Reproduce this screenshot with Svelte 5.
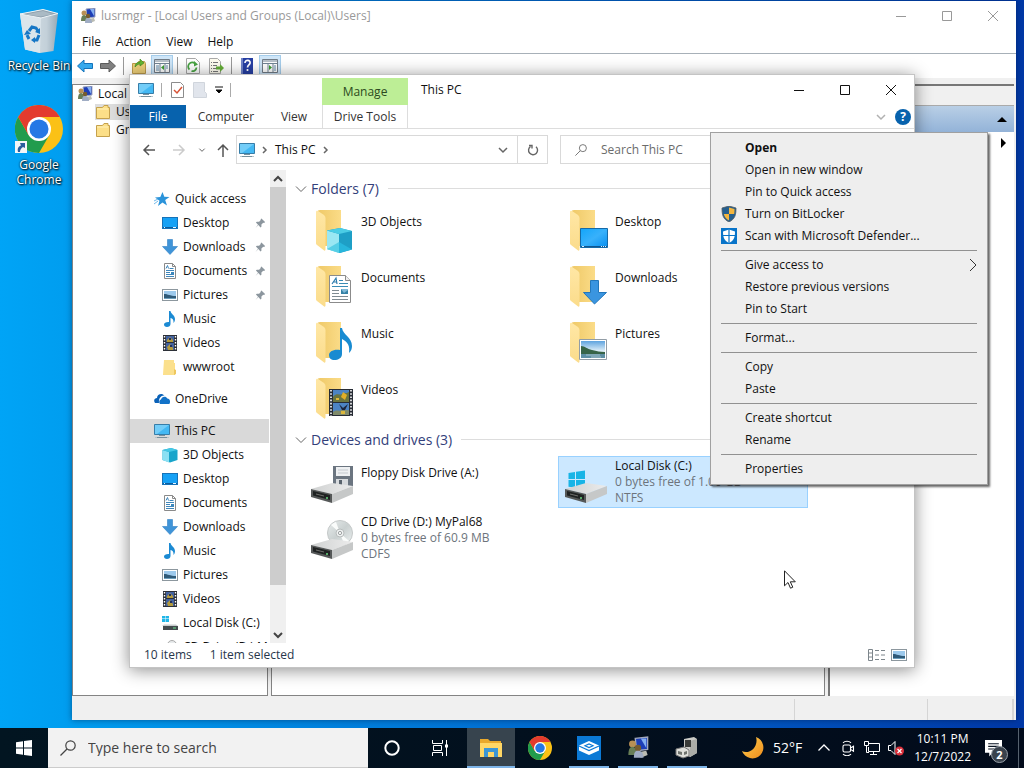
<script>
  let taskSearch = $state('');
  let pcSearch = $state('');
  let selectedDrive = $state('Local Disk (C:)');

  const quickAccess = [
    { name: 'Desktop', icon: 'desktop', pinned: true },
    { name: 'Downloads', icon: 'downloads', pinned: true },
    { name: 'Documents', icon: 'documents', pinned: true },
    { name: 'Pictures', icon: 'pictures', pinned: true },
    { name: 'Music', icon: 'music' },
    { name: 'Videos', icon: 'videos' },
    { name: 'wwwroot', icon: 'folder' }
  ];

  const thisPc = [
    { name: '3D Objects', icon: 'cube' },
    { name: 'Desktop', icon: 'desktop' },
    { name: 'Documents', icon: 'documents' },
    { name: 'Downloads', icon: 'downloads' },
    { name: 'Music', icon: 'music' },
    { name: 'Pictures', icon: 'pictures' },
    { name: 'Videos', icon: 'videos' },
    { name: 'Local Disk (C:)', icon: 'drive' },
    { name: 'CD Drive (D:) M', icon: 'cd' }
  ];

  const folders = [
    { name: '3D Objects', icon: 'cube' },
    { name: 'Desktop', icon: 'desktop' },
    { name: 'Documents', icon: 'documents' },
    { name: 'Downloads', icon: 'downloads' },
    { name: 'Music', icon: 'music' },
    { name: 'Pictures', icon: 'pictures' },
    { name: 'Videos', icon: 'videos' }
  ];

  const drives = [
    { name: 'Floppy Disk Drive (A:)', icon: 'floppy' },
    { name: 'Local Disk (C:)', icon: 'windows', free: '0 bytes free of 1.00 GB', fs: 'NTFS' },
    { name: 'CD Drive (D:) MyPal68', icon: 'cd', free: '0 bytes free of 60.9 MB', fs: 'CDFS' }
  ];

  // one inner array per separated group
  const menuGroups = [
    [
      { label: 'Open', bold: true },
      { label: 'Open in new window' },
      { label: 'Pin to Quick access' },
      { label: 'Turn on BitLocker', icon: 'uac' },
      { label: 'Scan with Microsoft Defender...', icon: 'defender' }
    ],
    [{ label: 'Give access to', sub: true }, { label: 'Restore previous versions' }, { label: 'Pin to Start' }],
    [{ label: 'Format...' }],
    [{ label: 'Copy' }, { label: 'Paste' }],
    [{ label: 'Create shortcut' }, { label: 'Rename' }],
    [{ label: 'Properties' }]
  ];
</script>

{#snippet small(name)}
  <svg class="i16" viewBox="0 0 16 16" aria-hidden="true">
    {#if name === 'desktop'}
      <rect x="0.5" y="2.5" width="15" height="11" fill="#16a1f5" stroke="#1672b8" />
      <path d="M1 12.5h14" stroke="#0b5c9c" /><path d="M2 12.5h1M11 12.5h3" stroke="#e8f6ff" />
    {:else if name === 'downloads'}
      <path d="M5.500 0.500h5v7h5L8 15.500 0.500 7.500h5z" fill="#3f94d8" stroke="#2f7fc4" stroke-width=".6" />
    {:else if name === 'documents'}
      <path d="M2.500 0.500h8l3 3v12h-11z" fill="#fff" stroke="#8a8a8a" />
      <path d="M10.500 0.500v3h3" fill="none" stroke="#8a8a8a" />
      <path d="M4 5.500 5.500 2.500l1 3M4 7.500h8M4 9.500h4M4 11.500h8M4 13.500h8M7.500 5.500h4" fill="none" stroke="#3f86ba" />
      <path d="M9 9h3v2H9z" fill="#3b87bd" />
    {:else if name === 'pictures'}
      <rect x="0.500" y="2.500" width="15" height="11" fill="#fff" stroke="#8c979e" />
      <path d="M2 4h12v8H2z" fill="#9cc9ec" /><path d="M2 7c4 0 6 2 12 2v3H2z" fill="#2f5a78" /><path d="M2 11h12v1H2z" fill="#6b9dbb" />
    {:else if name === 'music'}
      <path d="M7 0h1.500c.3 3 4.500 4 4.500 8 0 2-.7 3-1.500 4 .3-3-.7-4.500-3-5v6c0 2-1.600 3-3.500 3S2 15 2 13.500 4 10.800 7 11z" fill="#1b8ad3" />
    {:else if name === 'videos'}
      <path d="M1 0h14v16H1z" fill="#2c3038" /><path d="M4 1h8v6H4zM4 8h8v7H4z" fill="#4262a0" />
      <path d="M5 5l3-3 3 3v2H5zM5 12l3-3 3 4v2H6z" fill="#b49b3c" /><path d="M7 3h2v2H7zM8 10h2v2H8z" fill="#22305c" />
      <path d="M2.500 1v15M13.500 1v15" stroke="#fff" stroke-width="1.400" stroke-dasharray="1.500 1.500" />
    {:else if name === 'folder'}
      <path d="M2 1h10v3h1v12H1z" fill="#ffdf84" /><path d="M2 1h10v8c0 3 2 4 1 6l-2 1H2z" fill="#fbe08d" /><path d="M12 10l2 1v4l-2 1z" fill="#eec75e" />
    {:else if name === 'cube'}
      <path d="M0.500 3 9 1l6.500 2v10L8 15.500 0.500 13z" fill="#19a5cb" /><path d="M0.500 3 7 5v10.500L0.500 13z" fill="#8be0f3" /><path d="M0.500 3 9 1l6.500 2L7 5z" fill="#45c8e5" />
    {:else if name === 'drive'}
      <path d="M0 1h3v2.500H0zM3.500 1H7v2.500H3.500zM0 4h3v3H0zM3.500 4H7v3H3.500z" fill="#20b6e8" />
      <path d="M2 9.500h12l2 1.500H0z" fill="#c8cccd" /><path d="M1 11h15v4H1z" fill="#444b4e" /><path d="M11 12.500h3v1h-3z" fill="#68e28a" />
    {:else if name === 'cd'}
      <circle cx="10" cy="6" r="4.500" fill="#e8ebec" stroke="#aaa" /><circle cx="10" cy="6" r="1" fill="#fff" stroke="#999" />
      <path d="M0 11h16v4H0z" fill="#555" />
    {:else if name === 'pc'}
      <path d="M0.500 1.500h15v10h-15z" fill="#43b8f3" stroke="#377da8" /><path d="M1 2h14L3 11H1z" fill="#73cdf8" />
      <path d="M5 12.500h6M3 14.500h10" stroke="#77909d" /><path d="M1 14.500h2M13 14.500h2" stroke="#b7c3c9" />
    {:else if name === 'star'}
      <path d="M8.500 1l1.800 4.700 5.200.2-4.300 3.200 1.800 5.400L8.500 11.600 4 15l1.500-5.300L1 6.500l5.300-.6z" fill="#2a93da" /><path d="M0 10l4-2M0 13l4-3" stroke="#70b9ea" />
    {:else if name === 'onedrive'}
      <path d="M1 12C-1 9 1 7 3 7c0-4 5-5.500 7.500-2.500C6.500 4 4.500 8 5 12z" fill="#0b62b8" /><path d="M6 13c-1.600-2-.4-4 1-4.400.5-3 5-4 6.300-1 2.700 0 3.500 3 2 5.400z" fill="#1272c8" />
    {:else if name === 'users'}
      <path d="M6 1l9-1v9l-8 1z" fill="#1d3eb7" stroke="#a2a9bf" /><path d="M10 1l4 7V1z" fill="#84aff1" /><path d="M8 11l6-1 1 3-5 2z" fill="#bbbdb4" />
      <circle cx="4" cy="5" r="2.500" fill="#b99055" /><path d="M1 13c0-4 1-6 3-6s3 2 3 6z" fill="#687e56" />
      <circle cx="8" cy="8" r="2.300" fill="#765c2f" /><path d="M5 15c0-4 1-5 3-5s4 1 4 5z" fill="#a0adc4" />
    {:else if name === 'yellow'}
      <path d="M1.500 3.500h6l1.500-2h4v2h1.500v11h-13z" fill="#fcdf88" stroke="#c5a14c" /><path d="M2 5h11" stroke="#fff2ba" />
    {:else if name === 'uac'}
      <path d="M8 0l7 2c0 7-1 11-7 14C2 13 1 9 1 2z" fill="#26608f" /><path d="M8 1.500l5.500 1.500c0 2 0 3-.3 5H8zM2.800 8H8v6.500C5 13 3.500 11 2.800 8z" fill="#f5b63d" /><path d="M8 0l7 2c0 7-1 11-7 14C2 13 1 9 1 2z" fill="none" stroke="#505a61" stroke-width=".8" />
    {:else if name === 'defender'}
      <path d="M0 0h16v16H0z" fill="#0874c9" /><path d="M8 1.500l6 2c0 6-1 9-6 11.500C3 12.500 2 9.500 2 3.500z" fill="#fff" /><path d="M8 1v14M2 7.500h12" stroke="#0874c9" stroke-width="1.200" />
    {:else if name === 'back'}
      <path d="M0.500 8 7 2v3.500h8.500v5H7V14z" fill="#35a9ed" stroke="#1473ba" />
    {:else if name === 'forward'}
      <path d="M15.500 8 9 2v3.500H0.500v5H9V14z" fill="#808080" stroke="#5c5c5c" />
    {:else if name === 'upfolder'}
      <path d="M1.500 5.500h5l1-2h6l1 2v10h-13z" fill="#edcf79" stroke="#bd9b4c" /><path d="M4 9c0-3 2-5 5-5V1l4 4-4 3V6C7 6 6 7 4 9z" fill="#64b631" stroke="#398320" stroke-width=".6" />
    {:else if name === 'panel-left' || name === 'panel-right'}
      <path d="M0.500 1.500h15v13H0.500z" fill="#fff" stroke="#727c87" /><path d="M1 3h14M1 5.500h14" stroke="#718496" /><path d="M6 6v8M11 6v8" stroke="#718496" />
      {#if name === 'panel-left'}<path d="M10 7v5L7 9.500z" fill="#3c9e32" /><path d="M2 8h3M2 10h3M2 12h3M12 8h2M12 10h2" stroke="#5d89aa" />
      {:else}<path d="M7 7v5l3-2.500z" fill="#3c9e32" /><path d="M12 8h2M12 10h2M12 12h2" stroke="#5d89aa" />{/if}
    {:else if name === 'refresh'}
      <path d="M1.500 0.500h9l4 4v11h-13z" fill="#fff" stroke="#a8a8a8" />
      <path d="M4.500 11.500A4 4 0 0 1 10 5.500" fill="none" stroke="#49a343" stroke-width="1.800" /><path d="M9 3l4 3.500-4 2z" fill="#49a343" />
      <path d="M11.500 9.500a4 4 0 0 1-5 3.500" fill="none" stroke="#49a343" stroke-width="1.800" />
    {:else if name === 'export'}
      <path d="M1.500 0.500h8l3 3v12h-11z" fill="#fffdf0" stroke="#aaa" /><path d="M3 4.500h1M3 7.500h1M3 10.500h1M3 13.500h1M5 4.500h5M5 7.500h4M5 10.500h3M5 13.500h5" stroke="#777" /><path d="M8 8.500h4V6l4 4-4 4v-2.500H8z" fill="#65ae38" />
    {:else if name === 'help'}
      <path d="M2 0h12v16H2z" fill="#2740a4" /><path d="M2 0h2v16H2z" fill="#7084c8" /><path d="M6 5c0-4 6-3 5 .2C10.600 7 8.600 7 8.500 9.500M8.500 11v2" fill="none" stroke="#fff" stroke-width="1.700" />
    {:else if name === 'check'}
      <path d="M2.500 0.500h9l3 3v12h-12z" fill="#fff" stroke="#8c8c8c" /><path d="M5 8l3 3 5-6" fill="none" stroke="#d75235" stroke-width="1.500" />
    {:else if name === 'blank'}
      <path d="M1.500 0.500h11v9l2 2v4h-13z" fill="#e1e5ec" stroke="#d0d5dc" />
    {/if}
  </svg>
{/snippet}

{#snippet chevron(dir)}
  <svg class="chev" viewBox="0 0 12 12" aria-hidden="true">
    {#if dir === 'down'}<path d="M2 4l4 4 4-4" />
    {:else if dir === 'wide'}<path d="M1 3.500l5 5 5-5" />
    {:else if dir === 'up'}<path d="M2 8l4-4 4 4" />
    {:else}<path d="M4 3l3 3-3 3" />{/if}
  </svg>
{/snippet}

{#snippet magnifier()}
  <svg class="i16" viewBox="0 0 16 16" fill="none" stroke="currentColor" stroke-width="1.200" aria-hidden="true">
    <circle cx="10.500" cy="5.500" r="4.700" /><path d="M7 9 0.500 15.500" />
  </svg>
{/snippet}

{#snippet bigFolder(name)}
  <svg class="i48" viewBox="0 0 48 48" aria-hidden="true">
    <path d="M10 3.500 12 3h21v36H13z" fill="url(#folderBack)" />
    <path d="M8 5c0-1 1-1.500 2-1l6 4c1 1 1.500 2 1.500 3v31c0 2-1 2-2 1L9 38c-.7-.5-1-1-1-2z" fill="url(#folderFront)" />
    {#if name === 'cube'}
      <path d="M19 23.500 32 21l12 3v18.500L32 46l-13-4z" fill="#1e9fc6" />
      <path d="M19 23.500 31 27v19l-12-4z" fill="#9ae7f3" /><path d="M19 23.500 32 21l12 3-13 3z" fill="#4bcde5" />
      <path d="M31 46l13-3.500L31 35z" fill="#27b6dc" /><path d="M19 42l12-7v11z" fill="#57cfe6" />
    {:else if name === 'desktop'}
      <path d="M18.500 21.500h27v19h-27z" fill="url(#screen)" stroke="#156aa8" /><path d="M19 39.500h26" stroke="#0f5690" /><path d="M39 39.500h6" stroke="#d5efff" stroke-dasharray="1 1" /><path d="M20 39.500h2" stroke="#d5efff" />
    {:else if name === 'documents'}
      <path d="M21.500 12.500h16l5 5v22h-21z" fill="#fff" stroke="#8b8b8b" /><path d="M37.500 12.500v5h5" fill="#eee" stroke="#8b8b8b" />
      <path d="M24 21l4-6 1 6M25 19h4" fill="none" stroke="#2c7cae" stroke-width="1.200" /><path d="M31 17.500h4M31 20.500h9M24 23.500h16" stroke="#3a8cb5" />
      <path d="M24 27.500h7M24 30.500h7M24 33.500h16M24 36.500h16" stroke="#7f8b92" /><path d="M33 26h7v5h-7z" fill="#3482a6" /><path d="M33 26h7v1l-4 3z" fill="#81bad8" />
    {:else if name === 'downloads'}
      <path d="M28.500 17.500h8v12h8L32.500 41 21.500 29.500h7z" fill="#3a95e0" stroke="#2377bb" />
    {:else if name === 'music'}
      <path d="M32 9h2c1 7 10 9 10 18 0 3-1 5-3 7 1-7-1-11-7-14v15c0 4-4 6-7.500 6S21 39 21 36s4-6 11-5z" fill="#198bd1" />
    {:else if name === 'pictures'}
      <path d="M17.500 20.500h27v20h-27z" fill="#fff" stroke="#929da6" /><path d="M19 22h24v17H19z" fill="url(#sky)" />
      <path d="M19 27c4 0 6 3 11 4s8 2 13 2v2H19z" fill="#376448" /><path d="M19 35h24v4H19z" fill="#5d8fa4" /><path d="M24 36h14M29 38h10" stroke="#a4c1ca" />
    {:else if name === 'videos'}
      <path d="M21 14h24v27H21z" fill="#272c35" /><path d="M25 15h16v12H25zM25 28h16v12H25z" fill="#4c83c4" />
      <path d="M25 22c4-5 7-1 9-3s4 0 7-2v10H25z" fill="#6a743f" /><path d="M25 37c4-3 6 0 8-2s5 1 8 0v5H25z" fill="#7f8a6a" />
      <path d="M35 17l4 3-2 5-4-3z" fill="#e1ae28" /><path d="M31 29l4 4 5-4-3 6h-3z" fill="#1b243d" /><path d="M33 36h4v3h-4zM28 23h3v2h-3z" fill="#dcb73b" />
      <path d="M23 15v26M43 15v26" stroke="#fff" stroke-width="1.600" stroke-dasharray="1.600 1.600" />
    {/if}
  </svg>
{/snippet}

{#snippet bigDrive(name)}
  <svg class="i48" viewBox="0 0 48 48" aria-hidden="true">
    {#if name === 'floppy'}
      <path d="M25 8h20v20H27l-2-2z" fill="#6b7580" /><path d="M28 9h14v9H28z" fill="#eef0f2" /><path d="M28 21h12v7H28z" fill="#d7dadd" /><path d="M31 22h3v5h-3z" fill="#59636d" /><path d="M30 12h10M30 15h10" stroke="#c5cacf" />
    {:else if name === 'cd'}
      <circle cx="32" cy="19" r="12.500" fill="url(#disc)" stroke="#c5c9c9" /><path d="M32 19l-9-8a12 12 0 0 1 5-3zM32 19l9 8a12 12 0 0 1-5 3z" fill="#fafcfb" />
      <circle cx="32" cy="19" r="4" fill="#eef1f1" stroke="#b8bdbd" /><circle cx="32" cy="19" r="1.600" fill="#fff" stroke="#9ca1a1" />
    {:else}
      <path d="M6.500 15 13 14v7H6.500zM14 13.800 23 12.500V21h-9zM6.500 22H13v7.500l-6.500-.8zM14 22h9v8l-9-1z" fill="#18b4e6" />
    {/if}
    <path d="M3 31 24 25l21 3-21 8z" fill="url(#lid)" /><path d="M3 31l21 5v9L3 39z" fill="#555858" /><path d="M24 36 45 28v8L24 45z" fill="#c6c8c8" />
    <path d="M5 33l17 4v5L5 37.500z" fill="#1f2222" /><path d="M8 36l8 2" stroke="#70706d" /><circle cx="19" cy="40" r="1" fill="#6bd980" />
  </svg>
{/snippet}

{#snippet chrome()}
  <svg class="chrome" viewBox="0 0 48 48" aria-hidden="true">
    <circle cx="24" cy="24" r="24" fill="#fbc116" />
    <path d="M24 24 13.600 30 3.200 12A24 24 0 0 0 24 48l10.400-18z" fill="#219c4d" />
    <path d="M24 12h20.800A24 24 0 0 0 3.200 12l10.400 18z" fill="#e33b2e" />
    <circle cx="24" cy="24" r="12" fill="#fff" /><circle cx="24" cy="24" r="9.500" fill="#2678e5" />
  </svg>
{/snippet}

{#snippet windowButtons()}
  <div class="win-buttons">
    <button aria-label="Minimize"><svg viewBox="0 0 10 10"><path d="M0 5.500h10" /></svg></button>
    <button aria-label="Maximize"><svg viewBox="0 0 10 10"><path d="M0.500 0.500h9v9h-9z" /></svg></button>
    <button aria-label="Close"><svg viewBox="0 0 10 10"><path d="M0 0l10 10M10 0 0 10" /></svg></button>
  </div>
{/snippet}

{#snippet navRow(item)}
  <li>
    <a class="nav-row child" href="#{item.name}">
      {@render small(item.icon)}
      <span>{item.name}</span>
      {#if item.pinned}
        <svg class="pin" viewBox="0 0 12 12" aria-hidden="true"><path d="M7 1l4 4-1 1-1-.3-2 2V10L6 11 3.700 8.300 0.500 11.500l2.800-3.700L1 5.500l1-1h2.500l2-2L6 2z" /></svg>
      {/if}
    </a>
  </li>
{/snippet}

<svg class="defs" aria-hidden="true">
  <defs>
    <linearGradient id="folderBack"><stop offset="0" stop-color="#efc968" /><stop offset="1" stop-color="#fbdc88" /></linearGradient>
    <linearGradient id="folderFront" x2="0" y2="1"><stop offset="0" stop-color="#ffe7a5" /><stop offset="1" stop-color="#fbdc8b" /></linearGradient>
    <linearGradient id="screen" x2="1" y2="1"><stop offset="0" stop-color="#12a5fa" /><stop offset=".5" stop-color="#38b1fb" /><stop offset="1" stop-color="#078ff0" /></linearGradient>
    <linearGradient id="sky" x2="0" y2="1"><stop offset="0" stop-color="#5ea3df" /><stop offset=".6" stop-color="#e1f0f8" /></linearGradient>
    <linearGradient id="disc" x2="1" y2="1"><stop offset="0" stop-color="#e9eded" /><stop offset=".5" stop-color="#c9d0d0" /><stop offset="1" stop-color="#eef2f2" /></linearGradient>
    <linearGradient id="lid"><stop offset="0" stop-color="#cfd1d1" /><stop offset="1" stop-color="#ececec" /></linearGradient>
    <linearGradient id="bin"><stop offset="0" stop-color="#dce4e9" /><stop offset=".7" stop-color="#c3d0d9" /><stop offset="1" stop-color="#98a9b5" /></linearGradient>
    <linearGradient id="moon" x2="1" y2="1"><stop offset="0" stop-color="#ffcf50" /><stop offset="1" stop-color="#ef8d1c" /></linearGradient>
  </defs>
</svg>

<div class="screen">
  <main class="desktop">
    <div class="shortcuts">
      <a class="shortcut" href="#recycle">
        <svg class="shortcut-icon" viewBox="0 0 48 48" aria-hidden="true">
          <path d="M5 8 28 3.500 43 7.500 38.500 45 25 47 10 43.500z" fill="url(#bin)" />
          <path d="M5 8l21 4-1 35-15-3.500z" fill="#dbe5eb" /><path d="M5 8 28 3.500 43 7.500 26 12z" fill="#8ea0ad" stroke="#eef4f7" />
          <path d="M10 8.500 28 5l10 3-12 2.500z" fill="#aabac4" />
          <path d="M14 25l3-4 4 1 2 3M24 29l-2 5h-3M14 33l-2-4" fill="none" stroke="#1677c6" stroke-width="3" />
          <path d="M25 22v6l-5-2zM20 31v6l-4-3zM9 29l3-5 4 4z" fill="#1677c6" />
        </svg>
        <span>Recycle Bin</span>
      </a>
      <a class="shortcut" href="#chrome">
        <span class="shortcut-icon badged">
          {@render chrome()}
          <svg class="arrow" viewBox="0 0 12 12" aria-hidden="true"><path d="M0 0h12v12H0z" fill="#f4f6f8" /><path d="M3 11C2 7 4 5 6 4.500L5 2h5v5L8 6C6 7 5 9 5 11z" fill="#2a5f9e" /></svg>
        </span>
        <span>Google Chrome</span>
      </a>
    </div>

    <section class="mmc" aria-label="lusrmgr">
      <header class="mmc-title">
        {@render small('users')}
        <h2>lusrmgr - [Local Users and Groups (Local)\Users]</h2>
        {@render windowButtons()}
      </header>
      <nav class="mmc-menu">
        <button>File</button><button>Action</button><button>View</button><button>Help</button>
      </nav>
      <div class="mmc-tools">
        <button aria-label="Back">{@render small('back')}</button>
        <button aria-label="Forward">{@render small('forward')}</button>
        <i></i>
        <button aria-label="Up one level">{@render small('upfolder')}</button>
        <button class="on" aria-label="Console tree">{@render small('panel-left')}</button>
        <i></i>
        <button aria-label="Refresh">{@render small('refresh')}</button>
        <button aria-label="Export list">{@render small('export')}</button>
        <i></i>
        <button aria-label="Help">{@render small('help')}</button>
        <button class="on" aria-label="Action pane">{@render small('panel-right')}</button>
      </div>
      <div class="mmc-body">
        <ul class="tree">
          <li>{@render small('users')}<span>Local Users and Groups (Local)</span></li>
          <li class="leaf"><span class="pick">{@render small('yellow')}<span>Users</span></span></li>
          <li class="leaf">{@render small('yellow')}<span>Groups</span></li>
        </ul>
        <div class="list"></div>
        <aside class="actions">
          <div class="actions-head"></div>
          <button class="actions-users" aria-label="Collapse"><svg viewBox="0 0 10 5"><path d="M0 5 5 0l5 5z" /></svg></button>
          <button class="actions-more" aria-label="More actions"><svg viewBox="0 0 5 10"><path d="M0 0l5 5-5 5z" /></svg></button>
        </aside>
      </div>
      <footer class="mmc-status"><span></span><span></span><span></span><span></span></footer>
    </section>

    <section class="explorer" aria-label="This PC">
      <header class="ex-head">
        <div class="quick-tools">
          {@render small('pc')}<i></i>{@render small('check')}{@render small('blank')}
          <svg class="customize" viewBox="0 0 8 8" aria-hidden="true"><path d="M0 1h8" /><path d="M1 4h6L4 7z" /></svg><i></i>
        </div>
        <span class="context-tab">Manage</span>
        <h1>This PC</h1>
        {@render windowButtons()}
      </header>
      <nav class="ribbon">
        <button class="file">File</button>
        <button>Computer</button>
        <button class="view">View</button>
        <button class="tools">Drive Tools</button>
        <button class="expand" aria-label="Expand the ribbon">{@render chevron('down')}</button>
        <button class="help" aria-label="Help">?</button>
      </nav>
      <div class="address">
        <button class="nav-btn" aria-label="Back"><svg viewBox="0 0 14 14"><path d="M13 7H2M7 2 2 7l5 5" /></svg></button>
        <button class="nav-btn off" aria-label="Forward"><svg viewBox="0 0 14 14"><path d="M1 7h11M7 2l5 5-5 5" /></svg></button>
        <button class="recent" aria-label="Recent locations">{@render chevron('down')}</button>
        <button class="up" aria-label="Up"><svg viewBox="0 0 14 14"><path d="M7 14V2M2 7l5-5 5 5" /></svg></button>
        <div class="crumbs">
          {@render small('pc')}
          {@render chevron('right')}
          <a href="#pc">This PC</a>
          {@render chevron('right')}
          <button class="drop" aria-label="Previous locations">{@render chevron('down')}</button>
          <button class="reload" aria-label="Refresh"><svg viewBox="0 0 12 12"><path d="M3.500 2.500A4.500 4.500 0 1 0 9 2.800M2 1.500h3v3" /></svg></button>
        </div>
        <label class="ex-search">
          {@render magnifier()}
          <input type="text" placeholder="Search This PC" aria-label="Search This PC" bind:value={pcSearch} />
        </label>
      </div>
      <div class="ex-body">
        <nav class="side">
          <ul>
            <li><a class="nav-row" href="#quick">{@render small('star')}<span>Quick access</span></a></li>
            {#each quickAccess as item}{@render navRow(item)}{/each}
            <li class="space"><a class="nav-row" href="#onedrive">{@render small('onedrive')}<span>OneDrive</span></a></li>
            <li class="space"><a class="nav-row current" href="#pc">{@render small('pc')}<span>This PC</span></a></li>
            {#each thisPc as item}{@render navRow(item)}{/each}
          </ul>
        </nav>
        <div class="scrollbar">
          <button aria-label="Scroll up">{@render chevron('up')}</button>
          <div class="thumb"></div>
          <button aria-label="Scroll down">{@render chevron('down')}</button>
        </div>
        <div class="content">
          <h3>{@render chevron('wide')}<span>Folders (7)</span></h3>
          <div class="tiles">
            {#each folders as f}
              <button class="tile">{@render bigFolder(f.icon)}<span class="info">{f.name}</span></button>
            {/each}
          </div>
          <h3>{@render chevron('wide')}<span>Devices and drives (3)</span></h3>
          <div class="tiles">
            {#each drives as d}
              <button class="tile" class:selected={selectedDrive === d.name} onclick={() => (selectedDrive = d.name)}>
                {@render bigDrive(d.icon)}
                <span class="info" class:full={d.free}>
                  {d.name}
                  {#if d.free}<small>{d.free}</small><small>{d.fs}</small>{/if}
                </span>
              </button>
            {/each}
          </div>
        </div>
      </div>
      <footer class="ex-status">
        <span>10 items</span><span>1 item selected</span>
        <button class="details" aria-label="Details view"><svg class="view-list" viewBox="0 0 18 14" fill="none" stroke="#7c858b"><path d="M0.500 1.500h4v11h-4zM0.500 5h4M0.500 9h4" /><path d="M7 2.500h4M13 2.500h4M7 7h4M13 7h4M7 11.500h4M13 11.500h4" /></svg></button>
        <button aria-label="Large icons view">{@render small('pictures')}</button>
      </footer>
    </section>

    <div class="menu" role="menu">
      {#each menuGroups as group}
        <div class="menu-group">
          {#each group as entry}
            <button role="menuitem" class:bold={entry.bold}>
              <span class="slot">{#if entry.icon}{@render small(entry.icon)}{/if}</span>
              <span>{entry.label}</span>
              {#if entry.sub}<svg class="sub" viewBox="0 0 8 14" aria-hidden="true"><path d="M1 1l6 6-6 6" /></svg>{/if}
            </button>
          {/each}
        </div>
      {/each}
    </div>

    <svg class="pointer" viewBox="0 0 12 19" aria-hidden="true"><path d="M0.500 0.800v15l3.500-3.300 2.500 5.700 2.300-1-2.500-5.400h5z" fill="#fff" stroke="#222" /></svg>
  </main>

  <footer class="taskbar">
    <button class="start" aria-label="Start"><svg class="i16" viewBox="0 0 16 16"><path d="M0 2.300 7 1.300v6.300H0zM8 1.100 16 0v7.600H8zM0 8.500h7v6.300l-7-1zM8 8.500h8V16l-8-1.100z" fill="#fff" /></svg></button>
    <label class="task-search">
      {@render magnifier()}
      <input type="text" placeholder="Type here to search" aria-label="Type here to search" bind:value={taskSearch} />
    </label>
    <button class="tb" aria-label="Cortana"><svg class="i16" viewBox="0 0 16 16"><circle cx="8" cy="8" r="6.700" fill="none" stroke="#fff" stroke-width="2" /></svg></button>
    <button class="tb" aria-label="Task view"><svg class="i16" viewBox="0 0 16 16" fill="none" stroke="#fff"><path d="M0.500 0v3.500h10V0M0.500 16v-3.500h10V16M1.500 5.500h8v5h-8zM14.500 0v16" /><path d="M13 4.500h3v3h-3z" fill="#fff" stroke="none" /></svg></button>
    <div class="apps">
      <button class="tb active" aria-label="File Explorer"><svg class="i24" viewBox="0 0 24 24"><path d="M1 3h8l2 2h11v15H1z" fill="#e9a92c" /><path d="M1 7h22v14H1z" fill="#ffd766" /><path d="M5 12h14v9h-4v-5H9v5H5z" fill="#3c96d5" /></svg></button>
      <button class="tb" aria-label="Google Chrome">{@render chrome()}</button>
      <button class="tb open" aria-label="Sandbox"><svg class="i24" viewBox="0 0 24 24"><path d="M0 0h24v24H0z" fill="#0b79d5" /><path d="M2 9.500 12 5l10 4.500v5L12 19 2 14.500z" fill="#fff" /><path d="M2 10l10 4.500L22 10M8 9.700l4-1.800 4 1.800-4 1.800z" fill="none" stroke="#0b79d5" stroke-width="1.200" /></svg></button>
      <button class="tb open large" aria-label="lusrmgr">{@render small('users')}</button>
      <button class="tb open" aria-label="Computer Management"><svg class="i24" viewBox="0 0 24 24"><path d="M9 3l10-2 3 2v14l-7 4-6-4z" fill="#cacbc7" /><path d="M15 5l7-2v14l-7 4z" fill="#aaaca7" /><path d="M10 4h6v7h-6z" fill="#393b38" /><path d="M1 13l8-2 5 3v6l-6 2-7-3z" fill="#dedfda" stroke="#777" /><path d="M3 15l4 1v3l-4-1zM9 16l3-1v3l-3 1z" fill="#6e726d" /></svg></button>
    </div>
    <div class="tray">
      <button class="weather">
        <svg class="i24" viewBox="0 0 24 24" aria-hidden="true"><path d="M15 1a11 11 0 1 1-14 14c7 4 17-4 14-14z" fill="url(#moon)" /></svg>
        52°F
      </button>
      <button aria-label="Show hidden icons"><svg class="i16" viewBox="0 0 16 16" fill="none" stroke="#fff" stroke-width="1.300"><path d="M2.500 10.500 8 5l5.500 5.500" /></svg></button>
      <button aria-label="Meet now"><svg class="i16" viewBox="0 0 16 16" fill="none" stroke="#fff" stroke-width="1.100"><rect x="3" y="5" width="7.500" height="7" rx="1.500" /><path d="M10.500 8l3-1.800v5l-3-1.800M3 2.800c2-2 6-2 8 0M3 14.200c2 2 6 2 8 0" /></svg></button>
      <button aria-label="Network"><svg class="i16" viewBox="0 0 16 16" fill="none" stroke="#fff"><path d="M4 3.500h11.500v8H4.500V7M9.500 12v2.500M6 14.500h7M0.500 1.500h4v4h-4zM2.500 6v6.500H5" /></svg></button>
      <button aria-label="Volume muted"><svg class="i16" viewBox="0 0 16 16"><path d="M0.500 5.500H3l4-4v13l-4-4H0.500z" fill="none" stroke="#fff" /><circle cx="11.500" cy="11" r="4.500" fill="#d92f3a" /><path d="M9.500 9l4 4M13.500 9l-4 4" stroke="#fff" stroke-width="1.200" /></svg></button>
      <time datetime="2022-12-07T22:11"><span>10:11 PM</span><span>12/7/2022</span></time>
      <button class="notify" aria-label="Notifications">
        <svg viewBox="0 0 16 16" aria-hidden="true"><path d="M0 0h16v12H7l-3 3.500V12H0z" fill="#fff" /><path d="M3 3.500h10M3 6h10M3 8.500h6" stroke="#0a1524" /></svg>
        <b>2</b>
      </button>
      <span class="peek"></span>
    </div>
  </footer>
</div>

<style>
  :global(body) {
    margin: 0;
  }

  .screen {
    --blue: #0762ad;
    display: flex;
    flex-direction: column;
    height: 100vh;
    overflow: hidden;
    font-family: 'Segoe UI', 'Open Sans', 'Noto Sans', sans-serif;
    font-size: 12px;
    line-height: 16px;
    color: #111;
  }

  .screen * {
    box-sizing: border-box;
  }

  button {
    display: flex;
    align-items: center;
    border: 0;
    padding: 0;
    background: none;
    font: inherit;
    color: inherit;
    white-space: nowrap;
  }

  a {
    color: inherit;
    text-decoration: none;
  }

  ul {
    margin: 0;
    padding: 0;
    list-style: none;
  }

  h1,
  h2,
  h3 {
    margin: 0;
    font-size: 12px;
    font-weight: normal;
    white-space: nowrap;
  }

  input {
    flex: 1;
    min-width: 0;
    border: 0;
    padding: 0;
    background: none;
    font: inherit;
    color: inherit;
    outline: none;
  }

  input::placeholder {
    color: inherit;
    opacity: 1;
  }

  svg {
    display: block;
    flex: none;
  }

  .defs {
    position: absolute;
    width: 0;
    height: 0;
  }

  .i16 { width: 16px; height: 16px; }
  .i24 { width: 24px; height: 24px; }
  .i48 { width: 48px; height: 48px; }

  .chev {
    width: 12px;
    height: 12px;
    fill: none;
    stroke: #666;
    stroke-width: 1.5;
  }

  /* desktop */
  .desktop {
    position: relative;
    flex: 1;
    min-height: 0;
    background: linear-gradient(90deg, #00a4f6 0, #009cee 8%, #0064cc 60%, #0038a6 100%);
  }

  .shortcuts {
    display: flex;
    flex-direction: column;
    gap: 32px;
    width: 78px;
    padding-top: 6px;
  }

  .shortcut {
    display: flex;
    flex-direction: column;
    align-items: center;
    gap: 4px;
    line-height: 15px;
    color: #fff;
    text-align: center;
    text-shadow: 1px 1px 2px #000, 0 0 2px #000;
  }

  .shortcut-icon {
    width: 48px;
    height: 48px;
  }

  .badged {
    position: relative;
  }

  .chrome {
    width: 100%;
    height: 100%;
  }

  .arrow {
    position: absolute;
    left: 0;
    bottom: 0;
    width: 12px;
    height: 12px;
  }

  .win-buttons {
    display: flex;
    align-self: stretch;
    margin-left: auto;
  }

  .win-buttons button {
    justify-content: center;
    width: 46px;
  }

  .win-buttons svg {
    width: 10px;
    height: 10px;
    fill: none;
    stroke: currentColor;
  }

  /* management console */
  .mmc {
    position: absolute;
    inset: 1px 8px 8px 72px;
    display: flex;
    flex-direction: column;
    background: #fff;
    box-shadow: 0 0 6px rgba(0, 20, 60, 0.5);
  }

  .mmc-title {
    display: flex;
    align-items: center;
    gap: 5px;
    height: 29px;
    padding-left: 8px;
    color: #999;
  }

  .mmc-menu {
    display: flex;
    gap: 15px;
    height: 24px;
    padding-left: 10px;
    border-bottom: 1px solid #a7b0b8;
  }

  .mmc-tools {
    display: flex;
    align-items: center;
    gap: 1px;
    height: 24px;
    padding-left: 2px;
  }

  .mmc-tools button {
    justify-content: center;
    width: 22px;
    height: 22px;
  }

  .mmc-tools .on {
    background: #cfe6f8;
    border: 1px solid #a5cdeb;
  }

  .mmc-tools i {
    width: 1px;
    height: 18px;
    margin: 0 3px;
    background: #999;
  }

  .mmc-body {
    flex: 1;
    min-height: 0;
    display: flex;
    gap: 3px;
    padding: 6px 2px 0 0;
    background: #f0f0f0;
  }

  .tree {
    width: 196px;
    border: 1px solid #848484;
    background: #fff;
    overflow: hidden;
  }

  .tree li {
    display: flex;
    align-items: center;
    gap: 5px;
    height: 18px;
    padding-left: 4px;
    white-space: nowrap;
  }

  .tree .leaf {
    padding-left: 22px;
  }

  .pick {
    display: flex;
    gap: 5px;
    background: #ddd;
  }

  .list {
    flex: 1;
    border: 1px solid #848484;
    background: #fff;
  }

  .actions {
    width: 186px;
    border-top: 2px solid #777;
    border-left: 2px solid #777;
    background: #fff;
  }

  .actions-head {
    height: 20px;
    border-bottom: 1px solid #aaa;
    background: #f0f0f0;
  }

  .actions-users,
  .actions-more {
    justify-content: flex-end;
    width: 100%;
  }

  .actions-users {
    height: 26px;
    padding-right: 7px;
    background: linear-gradient(#b9cfe6, #93b3d8);
  }

  .actions-users svg {
    width: 10px;
    height: 5px;
  }

  .actions-more {
    height: 22px;
    padding-right: 8px;
  }

  .actions-more svg {
    width: 5px;
    height: 10px;
  }

  .mmc-status {
    display: flex;
    height: 24px;
    padding: 3px 2px 0 0;
    background: #f0f0f0;
  }

  .mmc-status span {
    border-right: 1px solid #d5d5d5;
  }

  .mmc-status span:nth-child(1) { flex: 1; }
  .mmc-status span:nth-child(2) { width: 133px; }
  .mmc-status span:nth-child(3) { width: 85px; }

  /* explorer */
  .explorer {
    position: absolute;
    inset: 74px 109px 60px 129px;
    display: flex;
    flex-direction: column;
    border: 1px solid #c4c4c4;
    background: #fff;
    box-shadow: 0 2px 16px rgba(0, 0, 0, 0.45);
  }

  .ex-head {
    display: flex;
    align-items: center;
    height: 30px;
  }

  .quick-tools {
    display: flex;
    align-items: center;
    gap: 7px;
    width: 192px;
    padding-left: 8px;
  }

  .quick-tools i {
    width: 1px;
    height: 14px;
    background: #aaa;
  }

  .customize {
    width: 8px;
    height: 8px;
    stroke: #111;
  }

  .context-tab {
    align-self: flex-end;
    width: 86px;
    height: 27px;
    background: #bdee96;
    line-height: 28px;
    text-align: center;
    color: #2c4a20;
  }

  h1 {
    padding-left: 13px;
  }

  .ribbon {
    display: flex;
    height: 24px;
    border-bottom: 1px solid #ddd;
    color: #333;
  }

  .ribbon button {
    justify-content: center;
    width: 80px;
  }

  .ribbon .file {
    width: 56px;
    background: var(--blue);
    color: #fff;
  }

  .ribbon .view {
    width: 56px;
  }

  .ribbon .tools {
    width: 86px;
    border: solid #ddd;
    border-width: 0 1px;
  }

  .ribbon .expand {
    width: 16px;
    margin-left: auto;
    opacity: 0.5;
  }

  .ribbon .help {
    align-self: center;
    width: 16px;
    height: 16px;
    margin: 0 3px 0 6px;
    border-radius: 50%;
    background: var(--blue);
    color: #fff;
    font-weight: bold;
  }

  .address {
    display: flex;
    align-items: center;
    height: 41px;
    padding: 0 7px 0 4px;
  }

  .nav-btn {
    justify-content: center;
    width: 30px;
  }

  .nav-btn svg,
  .up svg {
    width: 14px;
    height: 14px;
    fill: none;
    stroke: #555;
    stroke-width: 1.5;
  }

  .off {
    opacity: 0.3;
  }

  .recent {
    justify-content: center;
    width: 16px;
  }

  .recent .chev {
    width: 8px;
  }

  .up {
    justify-content: center;
    width: 26px;
  }

  .crumbs {
    flex: 308;
    display: flex;
    align-items: center;
    gap: 4px;
    height: 29px;
    padding-left: 2px;
    border: 1px solid #d9d9d9;
  }

  .drop {
    margin-left: auto;
    padding-right: 4px;
  }

  .reload {
    justify-content: center;
    width: 30px;
    height: 100%;
    border-left: 1px solid #d9d9d9;
  }

  .reload svg {
    width: 12px;
    height: 12px;
    fill: none;
    stroke: #666;
    stroke-width: 1.4;
  }

  .ex-search {
    flex: 333;
    display: flex;
    align-items: center;
    gap: 12px;
    height: 29px;
    margin-left: 12px;
    padding-left: 12px;
    border: 1px solid #d9d9d9;
    color: #6b6b6b;
  }

  .ex-search .i16 {
    height: 12px;
  }

  .ex-body {
    flex: 1;
    min-height: 0;
    display: flex;
  }

  .side {
    width: 140px;
    padding-top: 17px;
    overflow: hidden;
  }

  .side .space {
    margin-top: 8px;
  }

  .nav-row {
    display: flex;
    align-items: center;
    gap: 5px;
    width: 139px;
    height: 24px;
    padding: 0 3px 0 24px;
    white-space: nowrap;
    overflow: hidden;
  }

  .child {
    padding-left: 32px;
  }

  .current {
    background: #d9d9d9;
  }

  .pin {
    width: 11px;
    height: 12px;
    margin-left: auto;
    fill: #8c969e;
  }

  .scrollbar {
    display: flex;
    flex-direction: column;
    width: 16px;
    background: #f0f0f0;
  }

  .scrollbar button {
    justify-content: center;
    height: 17px;
  }

  .scrollbar .chev {
    stroke: #444;
    stroke-width: 2;
  }

  .thumb {
    height: 398px;
    margin-bottom: auto;
    background: #cdcdcd;
  }

  .content {
    flex: 1;
    min-width: 0;
    padding: 4px 0 0 9px;
  }

  h3 {
    display: flex;
    align-items: center;
    gap: 4px;
    height: 31px;
    padding-bottom: 2px;
    font-size: 14px;
    line-height: 20px;
    color: #33407a;
  }

  h3::after {
    content: '';
    flex: 1;
    height: 1px;
    margin: 0 12px 0 5px;
    background: #ddd;
  }

  h3 .chev {
    stroke-width: 1;
  }

  .tiles {
    display: grid;
    grid-template-columns: repeat(auto-fill, 250px);
    gap: 4px;
    padding-left: 9px;
  }

  .tile {
    align-items: flex-start;
    height: 52px;
    padding: 1px 3px;
    border: 1px solid transparent;
    text-align: left;
  }

  .selected {
    border-color: #99d1ff;
    background: #cce8ff;
  }

  .info {
    display: flex;
    flex-direction: column;
    padding: 7px 0 0 5px;
  }

  .info.full {
    padding-top: 0;
  }

  small {
    font-size: 12px;
    color: #6d747c;
  }

  .ex-status {
    display: flex;
    align-items: center;
    height: 24px;
    padding: 0 7px 0 14px;
    color: #27364b;
  }

  .ex-status span {
    margin-right: 18px;
  }

  .details {
    margin: 0 5px 0 auto;
  }

  .view-list {
    width: 18px;
    height: 14px;
  }

  /* context menu */
  .menu {
    position: absolute;
    top: 132px;
    left: 710px;
    width: 278px;
    padding: 4px 0;
    border: 1px solid #a0a0a0;
    background: #eee;
    box-shadow: 2px 2px 2px rgba(0, 0, 0, 0.6);
  }

  .menu-group + .menu-group::before {
    content: '';
    display: block;
    height: 1px;
    margin: 3px 10px;
    background: #919191;
  }

  .menu button {
    gap: 8px;
    width: 100%;
    height: 22px;
    padding: 0 10px;
  }

  .slot {
    width: 16px;
  }

  .bold {
    font-weight: bold;
  }

  .sub {
    width: 8px;
    height: 14px;
    margin-left: auto;
    fill: none;
    stroke: #333;
  }

  .pointer {
    position: absolute;
    top: 570px;
    left: 784px;
    width: 12px;
    height: 19px;
  }

  /* taskbar */
  .taskbar {
    display: flex;
    height: 40px;
    background: linear-gradient(90deg, #021521, #020b1b);
    color: #fff;
  }

  .start,
  .tb {
    justify-content: center;
    width: 48px;
  }

  .task-search {
    display: flex;
    align-items: center;
    gap: 12px;
    width: 320px;
    padding: 0 12px;
    border: 1px solid #ccc;
    border-width: 0 0 1px;
    background: #f2f2f2;
    color: #444;
    font-size: 14px;
  }

  .apps {
    display: flex;
    gap: 1px;
    padding-left: 3px;
  }

  .apps .chrome {
    width: 24px;
    height: 24px;
  }

  .active {
    background: #37444e;
    box-shadow: inset 0 -2px #7db4e8;
  }

  .open {
    background: linear-gradient(#7db4e8, #7db4e8) center bottom / 40px 2px no-repeat;
  }

  .large .i16 {
    width: 22px;
    height: 24px;
  }

  .tray {
    display: flex;
    align-items: center;
    gap: 8px;
    margin-left: auto;
  }

  .weather {
    gap: 8px;
    margin-right: 6px;
    font-size: 14px;
  }

  time {
    display: flex;
    flex-direction: column;
    line-height: 18px;
    text-align: center;
    margin: 0 3px 0 2px;
  }

  .notify {
    position: relative;
    width: 28px;
    height: 24px;
  }

  .notify svg {
    width: 17px;
    height: 17px;
    margin: 0 0 0 3px;
  }

  .notify b {
    position: absolute;
    left: 9px;
    top: 10px;
    width: 17px;
    height: 17px;
    border: 1px solid #99a1a9;
    border-radius: 50%;
    background: #39424d;
    font-size: 11px;
    line-height: 15px;
    text-align: center;
  }

  .peek {
    width: 6px;
    height: 100%;
    border-left: 1px solid #56616e;
  }
</style>
